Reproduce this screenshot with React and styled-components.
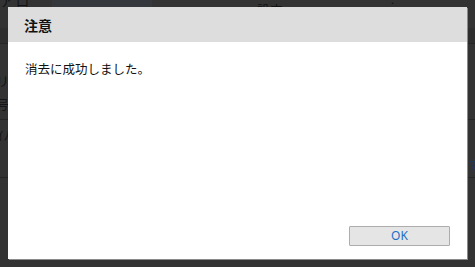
import React from "react";
import styled, { createGlobalStyle } from "styled-components";

const Global = createGlobalStyle`
  html, body { margin: 0; padding: 0; background: #333333; }
  body { font-family: "Noto Sans CJK JP", "Noto Sans", sans-serif; overflow: hidden; }
`;

const Stage = styled.div`
  position: relative;
  width: 475px;
  height: 267px;
  overflow: hidden;
  background: #333333;
`;

/* dimmed page behind the modal */
const Backdrop = styled.div`
  display: flex;
  flex-direction: column;
  height: 100%;
  color: #121212;
  font-size: 13px;
`;

const TopBar = styled.div`
  display: grid;
  grid-template-columns: 52px 100px 1fr 110px;
  height: 28px;
  align-items: start;
`;

const TopCell = styled.div`
  height: 100%;
  background: ${(p) => p.$bg || "transparent"};
  padding-left: ${(p) => p.$pl || 0}px;
  line-height: 14px;
  margin-top: ${(p) => p.$mt || 0}px;
  font-size: 13px;
  white-space: nowrap;
  overflow: hidden;
`;

const Band = styled.div`
  height: ${(p) => p.$h}px;
  background: ${(p) => p.$bg || "transparent"};
  border-bottom: ${(p) => (p.$line ? "1px solid #262626" : "none")};
  display: flex;
  justify-content: space-between;
  align-items: center;
  color: ${(p) => p.$color || "#151515"};
  font-size: 13px;
  white-space: nowrap;
  overflow: hidden;
`;

const EdgeText = styled.span`
  margin-left: ${(p) => p.$ml || 0}px;
  margin-right: ${(p) => p.$mr || 0}px;
`;

/* modal */
const Dialog = styled.div`
  position: absolute;
  left: 8px;
  top: 7px;
  width: 459px;
  height: 252px;
  background: #ffffff;
  display: flex;
  flex-direction: column;
  box-shadow: 1px 1px 0 #8a8a8a;
`;

const Header = styled.div`
  height: 35px;
  flex: none;
  background: #dddddd;
  display: flex;
  align-items: center;
  padding-left: 16px;
  font-size: 14px;
  font-weight: 700;
  color: #111111;
`;

const Body = styled.div`
  flex: 1;
  padding: 18px 17px 0;
  font-size: 12.5px;
  line-height: 18px;
  color: #111111;
`;

const Footer = styled.div`
  display: flex;
  justify-content: flex-end;
  padding: 0 17px 13px 0;
`;

const Button = styled.button`
  width: 101px;
  height: 20px;
  box-sizing: border-box;
  border: 1px solid #adadad;
  border-radius: 1px;
  background: #e5e5e5;
  color: #1d6fc6;
  font-family: "Noto Sans", "Open Sans", sans-serif;
  font-size: 12px;
  line-height: 16px;
  padding: 0;
  cursor: pointer;
`;

export default function App() {
  return (
    <>
      <Global />
      <Stage>
        <Backdrop>
          <TopBar>
            <TopCell $pl={0} $mt={-6}>ア 口</TopCell>
            <TopCell $bg="#34383c" />
            <TopCell $pl={105} $mt={3}>設定</TopCell>
            <TopCell $pl={12} $mt={-8}>· ⁘</TopCell>
          </TopBar>
          <Band $h={15} $bg="#2e2e2e" $line />
          <Band $h={28} />
          <Band $h={18}>
            <EdgeText $ml={-4}>リ</EdgeText>
          </Band>
          <Band $h={30} $line>
            <EdgeText $ml={-4}>号</EdgeText>
          </Band>
          <Band $h={30}>
            <EdgeText $ml={-3}>ｲﾉ</EdgeText>
          </Band>
          <Band $h={28} $color="#1c3a5a" $line>
            <span />
            <EdgeText $mr={-6}>す</EdgeText>
          </Band>
          <Band $h={90} />
        </Backdrop>
        <Dialog role="dialog">
          <Header>注意</Header>
          <Body>消去に成功しました。</Body>
          <Footer>
            <Button>OK</Button>
          </Footer>
        </Dialog>
      </Stage>
    </>
  );
}
